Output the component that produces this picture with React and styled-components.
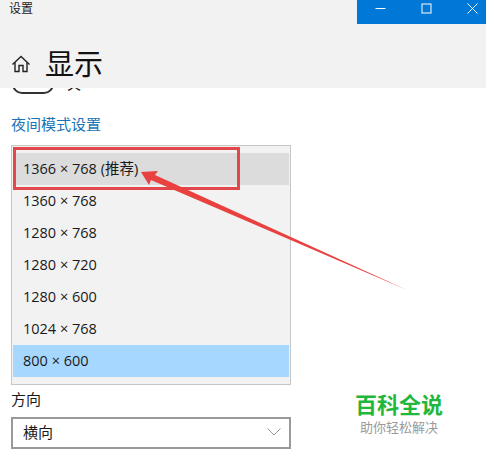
import React from 'react'
import styled, {createGlobalStyle} from 'styled-components'

const Global = createGlobalStyle`
    html, body {
        margin: 0;
        padding: 0;
        background: #fff;
    }
    body {
        font-family: 'Open Sans', 'Noto Sans CJK SC', sans-serif;
        color: #1a1a1a;
    }
`

const Page = styled.div`
    position: relative;
    width: 486px;
    height: 465px;
    overflow: hidden;
    background: #fff;
`

const Header = styled.header`
    height: 88px;
    background: #f2f2f2;
    display: flex;
    flex-direction: column;
`

const TitleBar = styled.div`
    height: 24px;
    display: flex;
    justify-content: space-between;
`

const WindowTitle = styled.div`
    padding-left: 9px;
    font-size: 12px;
    line-height: 17px;
    color: #222;
`

const WindowControls = styled.div`
    width: 129px;
    overflow: hidden;
    background: #0078d7;
    display: grid;
    grid-template-columns: 46px 46px 46px;
    justify-items: center;
    align-items: center;
    padding-bottom: 8px;
    box-sizing: border-box;
`

const PageTitleRow = styled.div`
    display: flex;
    align-items: center;
    padding: 21px 0 0 11px;
    gap: 14px;
`

const PageTitle = styled.h1`
    margin: 0;
    font-size: 29px;
    font-weight: 400;
    line-height: 38px;
    color: #111;
`

const Content = styled.main`
    height: 377px;
    overflow: hidden;
    padding-left: 11px;
`

const ClippedToggleRow = styled.div`
    height: 20px;
    margin-top: -14px;
    display: flex;
    align-items: flex-start;
    gap: 13px;
    padding-left: 1px;
`

const Toggle = styled.div`
    width: 38px;
    height: 16px;
    border: 2px solid #333;
    border-radius: 10px;
`

const ToggleLabel = styled.span`
    font-size: 14px;
    line-height: 20px;
`

const NightLink = styled.a`
    display: block;
    margin-top: 20px;
    font-size: 15px;
    line-height: 20px;
    color: #1a73b5;
`

const ListBox = styled.ul`
    list-style: none;
    box-sizing: border-box;
    width: 280px;
    height: 240px;
    margin: 11px 0 0;
    padding: 7px 1px;
    background: #f2f2f2;
    border: 1px solid #c6c6c6;
`

const Option = styled.li`
    height: 32px;
    padding-left: 10px;
    font-size: 14.5px;
    line-height: 32px;
    background: ${({$state}) => ({hover: '#dcdcdc', selected: '#a6d8ff'}[$state] || 'transparent')};
`

const FieldLabel = styled.div`
    margin-top: 4px;
    font-size: 15px;
    line-height: 20px;
`

const Select = styled.div`
    box-sizing: border-box;
    width: 280px;
    height: 32px;
    margin-top: 8px;
    padding: 0 8px 3px 10px;
    display: flex;
    align-items: center;
    justify-content: space-between;
    border: 2px solid #999;
    background: #fff;
    font-size: 15px;
`

const HighlightBox = styled.div`
    position: absolute;
    left: 13px;
    top: 147px;
    width: 227px;
    height: 43px;
    box-sizing: border-box;
    border: 3px solid #e2474b;
`

const ArrowOverlay = styled.svg`
    position: absolute;
    left: 0;
    top: 0;
    pointer-events: none;
`

const Watermark = styled.div`
    position: absolute;
    left: 354px;
    top: 389px;
    width: 90px;
    display: flex;
    flex-direction: column;
    align-items: center;
`

const WatermarkName = styled.div`
    font-size: 22px;
    font-weight: 700;
    line-height: 28px;
    color: #1fb83c;
    font-family: 'Noto Sans CJK SC', sans-serif;
    white-space: nowrap;
`

const WatermarkTag = styled.div`
    margin-top: 2px;
    font-size: 13px;
    line-height: 16px;
    color: #9a9a9a;
    font-family: 'Noto Sans CJK SC', sans-serif;
    white-space: nowrap;
`

const resolutions = [
    {label: '1366 × 768 (推荐)', state: 'hover'},
    {label: '1360 × 768'},
    {label: '1280 × 768'},
    {label: '1280 × 720'},
    {label: '1280 × 600'},
    {label: '1024 × 768'},
    {label: '800 × 600', state: 'selected'},
]

export default function App() {
    return (
        <Page>
            <Global />
            <Header>
                <TitleBar>
                    <WindowTitle>设置</WindowTitle>
                    <WindowControls>
                        <svg width="11" height="11" viewBox="0 0 11 11"><path d="M0.5 5.5H10.5" stroke="#fff" strokeWidth="1" /></svg>
                        <svg width="11" height="11" viewBox="0 0 11 11"><rect x="1" y="1" width="9" height="9" fill="none" stroke="#fff" strokeWidth="1" /></svg>
                        <svg width="11" height="11" viewBox="0 0 11 11"><path d="M0.5 0.5L10.5 10.5M10.5 0.5L0.5 10.5" stroke="#fff" strokeWidth="1" /></svg>
                    </WindowControls>
                </TitleBar>
                <PageTitleRow>
                    <svg width="20" height="20" viewBox="0 0 20 20" fill="none" stroke="#222" strokeWidth="1.4">
                        <path d="M1.5 10.5L10 2.5L18.5 10.5" />
                        <path d="M4 8.5V17.5H8V11.5H12V17.5H16V8.5" />
                    </svg>
                    <PageTitle>显示</PageTitle>
                </PageTitleRow>
            </Header>
            <Content>
                <ClippedToggleRow>
                    <Toggle />
                    <ToggleLabel>关</ToggleLabel>
                </ClippedToggleRow>
                <NightLink>夜间模式设置</NightLink>
                <ListBox>
                    {resolutions.map(r => <Option key={r.label} $state={r.state}>{r.label}</Option>)}
                </ListBox>
                <FieldLabel>方向</FieldLabel>
                <Select>
                    横向
                    <svg width="14" height="8" viewBox="0 0 14 8" fill="none" stroke="#999" strokeWidth="1"><path d="M0.5 0.5L7 7L13.5 0.5" /></svg>
                </Select>
            </Content>
            <HighlightBox />
            <ArrowOverlay width="486" height="465" viewBox="0 0 486 465">
                <polygon points="141,172 158,171 155,175 407,290 151,180 149,185" fill="#e8413f" />
            </ArrowOverlay>
            <Watermark>
                <WatermarkName>百科全说</WatermarkName>
                <WatermarkTag>助你轻松解决</WatermarkTag>
            </Watermark>
        </Page>
    )
}
